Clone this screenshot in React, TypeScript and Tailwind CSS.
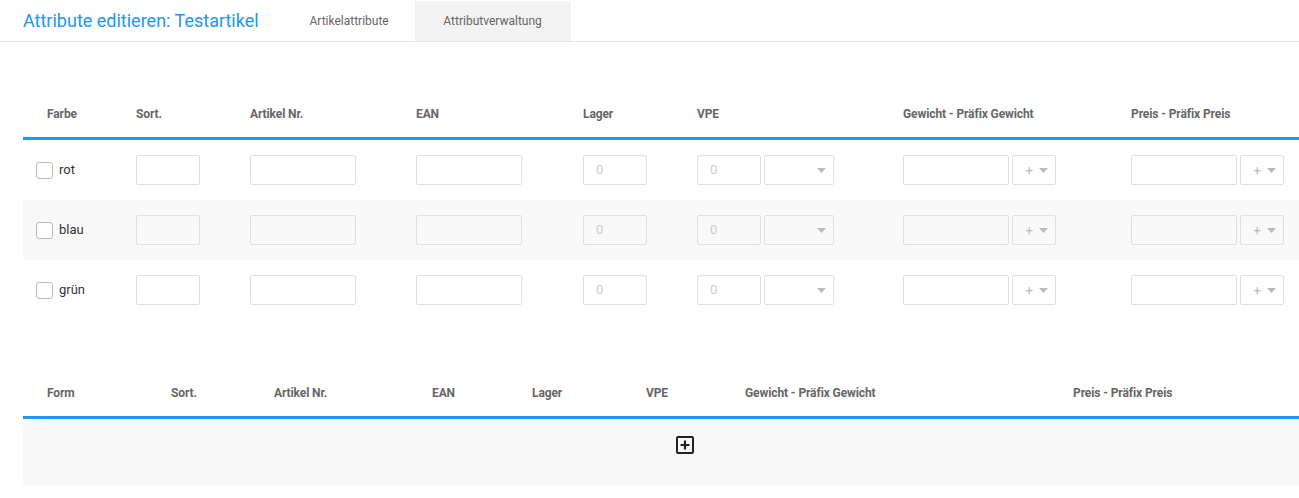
import React from 'react';

const font = { fontFamily: 'Roboto, "Liberation Sans", sans-serif' };

type Row = { name: string; striped: boolean };

const rows: Row[] = [
  { name: 'rot', striped: false },
  { name: 'blau', striped: true },
  { name: 'grün', striped: false },
];

const Caret = () => (
  <svg width="9" height="5" viewBox="0 0 9 5" className="text-[#bbb]">
    <path d="M0 0h9L4.5 5z" fill="currentColor" />
  </svg>
);

const TextInput = ({ w, placeholder }: { w: string; placeholder?: string }) => (
  <div className={`${w} h-[30px] border border-[#e0e0e0] rounded-[2px] flex items-center pl-3 text-[13px] text-[#ccc]`}>
    {placeholder}
  </div>
);

const SelectBox = ({ w, plus }: { w: string; plus?: boolean }) => (
  <div className={`${w} h-[30px] border border-[#e0e0e0] rounded-[2px] flex items-center justify-end gap-[6px] pr-[7px] text-[13px] text-[#bbb]`}>
    {plus && <span className="leading-none">+</span>}
    <Caret />
  </div>
);

const PlusSquare = () => (
  <svg width="18" height="18" viewBox="0 0 18 18">
    <rect x="1" y="1" width="16" height="16" fill="none" stroke="#222" strokeWidth="2" rx="1" />
    <path d="M9 4.5v9M4.5 9h9" stroke="#222" strokeWidth="2.2" />
  </svg>
);

const th = 'text-[12px] font-bold text-[#666] pl-6 text-left tracking-[-0.1px]';

export default function App() {
  return (
    <div className="bg-white w-[1299px] h-[498px] overflow-hidden" style={font}>
      <div className="flex items-end h-[42px] border-b border-[#e5e5e5]">
        <div className="pl-[23px] pr-[25px] h-[41px] flex items-center text-[18px] text-[#2196f3]">
          Attribute editieren: Testartikel
        </div>
        <div className="h-[41px] w-[131px] flex items-center justify-center text-[12px] text-[#666]">Artikelattribute</div>
        <div className="h-[40px] w-[156px] bg-[#f3f3f3] flex items-center justify-center text-[12px] text-[#666]">Attributverwaltung</div>
      </div>

      <div className="ml-[23px] mt-[48px]">
        <div className="flex h-[47px] items-center border-b-[3px] border-[#2196f3] box-content">
          <div className={`${th} w-[113px]`}>Farbe</div>
          <div className={`${th} w-[114px] !pl-0`}>Sort.</div>
          <div className={`${th} w-[166px] !pl-0`}>Artikel Nr.</div>
          <div className={`${th} w-[167px] !pl-0`}>EAN</div>
          <div className={`${th} w-[114px] !pl-0`}>Lager</div>
          <div className={`${th} w-[206px] !pl-0`}>VPE</div>
          <div className={`${th} w-[228px] !pl-0`}>Gewicht - Präfix Gewicht</div>
          <div className={`${th} w-[168px] !pl-0`}>Preis - Präfix Preis</div>
        </div>
        {rows.map((r) => (
          <div key={r.name} className={`flex h-[60px] items-center ${r.striped ? 'bg-[#f9f9f9]' : ''}`}>
            <div className="w-[113px] pl-[13px] flex items-center gap-[6px]">
              <div className="w-[17px] h-[17px] border border-[#bbb] rounded-[3px] bg-white" />
              <span className="text-[13px] text-[#333]">{r.name}</span>
            </div>
            <div className="w-[114px]"><TextInput w="w-[64px]" /></div>
            <div className="w-[166px]"><TextInput w="w-[106px]" /></div>
            <div className="w-[167px]"><TextInput w="w-[106px]" /></div>
            <div className="w-[114px]"><TextInput w="w-[64px]" placeholder="0" /></div>
            <div className="w-[206px] flex gap-[3px]">
              <TextInput w="w-[64px]" placeholder="0" />
              <SelectBox w="w-[70px]" />
            </div>
            <div className="w-[228px] flex gap-[3px]">
              <TextInput w="w-[106px]" />
              <SelectBox w="w-[44px]" plus />
            </div>
            <div className="w-[168px] flex gap-[3px]">
              <TextInput w="w-[106px]" />
              <SelectBox w="w-[44px]" plus />
            </div>
          </div>
        ))}
      </div>

      <div className="ml-[23px] mt-[49px]">
        <div className="flex h-[47px] items-center border-b-[3px] border-[#2196f3] box-content">
          <div className={`${th} w-[124px]`}>Form</div>
          <div className={`${th} w-[103px]`}>Sort.</div>
          <div className={`${th} w-[158px]`}>Artikel Nr.</div>
          <div className={`${th} w-[100px]`}>EAN</div>
          <div className={`${th} w-[114px]`}>Lager</div>
          <div className={`${th} w-[99px]`}>VPE</div>
          <div className={`${th} w-[328px]`}>Gewicht - Präfix Gewicht</div>
          <div className={`${th} w-[250px]`}>Preis - Präfix Preis</div>
        </div>
        <div className="h-[67px] bg-[#f9f9f9] pl-[653px] pt-[17px]">
          <PlusSquare />
        </div>
      </div>
    </div>
  );
}
